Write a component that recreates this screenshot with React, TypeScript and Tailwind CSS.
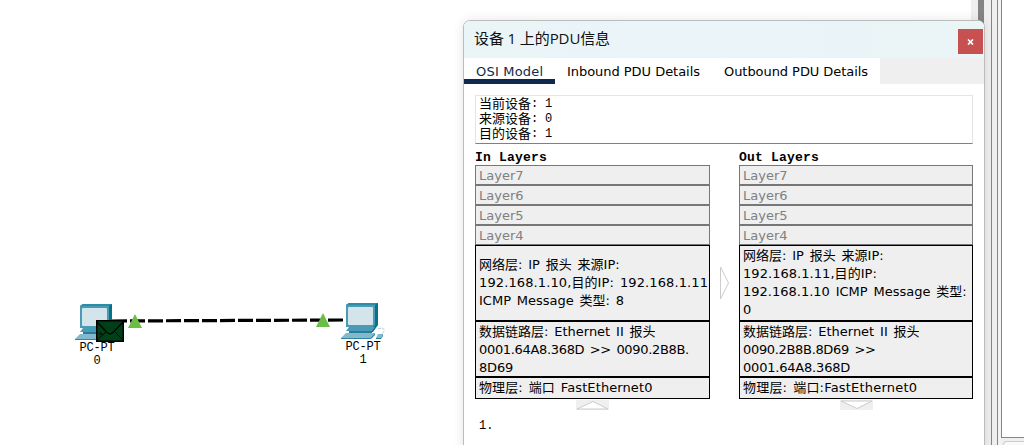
import type { ReactNode } from 'react';

const ui = "font-['DejaVu_Sans','Noto_Sans_CJK_SC',sans-serif]";
const mono = "font-['Liberation_Mono','Noto_Sans_CJK_SC',monospace]";

function Computer({ cable = false }: { cable?: boolean }) {
  return (
    <svg width="46" height="38" viewBox="0 0 46 38" className="block">
      <path d="M5 2 8 0H37V20L34 23Z" fill="#067389" />
      <path d="M5 2 8 0H37L34 2Z" fill="#2b8da6" />
      <rect x="5" y="2" width="29" height="22" fill="#4b9ab5" />
      <rect x="7" y="4" width="25" height="18" rx="1" fill="#d3e4ea" />
      <path d="M34 22 37 19V22L32 29H31V25Z" fill="#067389" />
      <path d="M8 24H34L31 28H5Z" fill="#4b9ab5" />
      <path d="M8 28H31V30H8Z" fill="#287e99" />
      <path d="M5 30H34L29 35H0Z" fill="#83b9cc" />
      <path d="M0 35H29L34 30V32L30 36H0Z" fill="#3284a0" />
      {cable && (
        <>
          <path d="M37 26C44 23 45 29 40 31" fill="none" stroke="#a9c9d6" strokeDasharray="3 1" />
          <path d="M37 31H42L40 35H35Z" fill="#83b9cc" />
          <path d="M35 35H40L42 31V33L40 36H35Z" fill="#287e99" />
        </>
      )}
    </svg>
  );
}

function Device({ name, cable }: { name: string; cable?: boolean }) {
  return (
    <div className="w-[46px]">
      <Computer cable={cable} />
      <div className={`${mono} flex flex-col items-center pr-[2px] text-[12px] leading-[13px] text-black`}>
        <span className="tracking-[-0.2px]">PC-PT</span>
        <span>{name}</span>
      </div>
    </div>
  );
}

function Topology() {
  return (
    <div className="relative h-full w-[463px] shrink-0">
      <svg className="absolute left-0 top-0" width="463" height="445">
        <path d="M112 321 345 320" stroke="#000" strokeWidth="3.2" strokeDasharray="15 3" />
        <path d="M135 314 142 328H128Z" fill="#6abd45" />
        <path d="M323 313 330 327H316Z" fill="#6abd45" />
      </svg>
      <div className="absolute left-[75px] top-[304px]">
        <Device name="0" />
      </div>
      <div className="absolute left-[341px] top-[303px]">
        <Device name="1" cable />
      </div>
      <svg className="absolute left-[96px] top-[320px]" width="28" height="22">
        <rect x=".75" y=".75" width="26.5" height="20.5" fill="#004019" stroke="#000" strokeWidth="1.5" />
        <path d="M1 2 11 12.5 14 14 17 12.5 27 2" fill="none" stroke="#000" strokeWidth="1.3" />
        <path d="M1 20 10 12M27 20 19 12M4 12 7 15M3 14H6" fill="none" stroke="#000" strokeWidth=".8" />
      </svg>
    </div>
  );
}

function Cell({ height, children }: { height: string; children: ReactNode }) {
  return (
    <div className={`${height} flex flex-col justify-center whitespace-nowrap border border-black bg-[#efefef] pl-[3px] text-[13px] leading-[18px] text-black [word-spacing:1.7px]`}>
      {children}
    </div>
  );
}

function Layers({ title, width, children }: { title: string; width: string; children: ReactNode }) {
  return (
    <section className={width}>
      <h2 className={`${mono} h-[16px] text-[13px] font-bold leading-[17px] tracking-[0.2px] text-black`}>{title}</h2>
      {['Layer7', 'Layer6', 'Layer5', 'Layer4'].map((layer) => (
        <div key={layer} className="h-[20px] border border-[#777] bg-[#efefef] pl-[3px] text-[13px] leading-[19px] text-[#808080]">
          {layer}
        </div>
      ))}
      {children}
    </section>
  );
}

function Dialog() {
  return (
    <div className={`${ui} absolute left-[463px] top-[20px] flex h-[435px] w-[522px] flex-col overflow-hidden rounded-t-[7px] border border-[#bcbcbc] bg-white shadow-[0_0_12px_rgba(0,0,0,0.10)]`}>
      <header className="flex h-[37px] shrink-0 items-start justify-between bg-linear-to-r from-[#eaf5f7] via-[#ebf4fa] to-[#eaf5f6] pl-[10px]">
        <h1 className="font-['Open_Sans','Noto_Sans_CJK_SC',sans-serif] text-[15px] leading-[35px] tracking-[-0.1px] text-[#111]">设备 1 上的PDU信息</h1>
        <button aria-label="Close" className="mr-px mt-[8px] flex h-[25px] w-[25px] items-center justify-center bg-[#c75050]">
          <svg width="7" height="6" viewBox="0 0 7 6">
            <path d="M1 .5 6 5.5M6 .5 1 5.5" stroke="#fff" strokeWidth="1.7" />
          </svg>
        </button>
      </header>
      <nav className="flex h-[26px] shrink-0 bg-[#efefef] text-[13px] leading-[27px] text-black">
        <span className="h-full w-[91px] whitespace-nowrap border-b-[5px] border-[#10284f] bg-white pl-[12px] tracking-[0.2px] text-[#10284f]">OSI Model</span>
        <span className="w-[157px] whitespace-nowrap bg-white pl-[12px] tracking-[-0.04px]">Inbound PDU Details</span>
        <span className="w-[168px] whitespace-nowrap bg-white pl-[12px] tracking-[-0.06px]">Outbound PDU Details</span>
      </nav>
      <main className="pl-[11px] pt-[11px]">
        <div className="h-[49px] w-[498px] border border-b-[#808080] border-l-[#e5e5e5] border-r-[#e5e5e5] border-t-[#e5e5e5] pl-[3px] text-[13px] leading-[15px] text-black">
          {[['当前设备', '1'], ['来源设备', '0'], ['目的设备', '1']].map(([label, value]) => (
            <div key={label} className="flex h-[15px]">
              <span className="w-[52px]">{label}</span>
              <span className={`${mono} w-[14px] pt-px text-[12px]`}>:</span>
              <span className={`${mono} pt-px text-[12px]`}>{value}</span>
            </div>
          ))}
        </div>
        <div className="mt-[5px] flex">
          <Layers title="In Layers" width="w-[235px]">
            <Cell height="h-[76px]">
              <span>网络层: IP 报头 来源IP:</span>
              <span className="tracking-[0.11px]">192.168.1.10,目的IP: 192.168.1.11</span>
              <span>ICMP Message 类型: 8</span>
            </Cell>
            <Cell height="h-[56px] pt-[2px]">
              <span>数据链路层: Ethernet II 报头</span>
              <span className="tracking-[-0.33px]">0001.64A8.368D &gt;&gt; 0090.2B8B.</span>
              <span className="tracking-[-0.2px]">8D69</span>
            </Cell>
            <Cell height="h-[22px]">
              <span className="tracking-[0.1px]">物理层: 端口 FastEthernet0</span>
            </Cell>
            <svg className="ml-[101px] mt-px block" width="33" height="10">
              <path d="M0 0H33V10H0Z" fill="#efefef" />
              <path d="M1 9 17 1.5 32 9Z" fill="#fff" stroke="#ccc" />
            </svg>
          </Layers>
          <div className="flex w-[29px] justify-center pt-[117px]">
            <svg width="9" height="34" className="mr-[1px]">
              <path d="M.5 1V33L8.5 17Z" fill="#fff" stroke="#ccc" />
            </svg>
          </div>
          <Layers title="Out Layers" width="w-[234px]">
            <Cell height="h-[76px]">
              <span>网络层: IP 报头 来源IP:</span>
              <span className="tracking-[0.05px]">192.168.1.11,目的IP:</span>
              <span>192.168.1.10 ICMP Message 类型:</span>
              <span>0</span>
            </Cell>
            <Cell height="h-[56px] pt-[2px]">
              <span>数据链路层: Ethernet II 报头</span>
              <span className="tracking-[-0.33px]">0090.2B8B.8D69 &gt;&gt;</span>
              <span className="tracking-[-0.2px]">0001.64A8.368D</span>
            </Cell>
            <Cell height="h-[22px]">
              <span className="tracking-[0.2px]">物理层: 端口:FastEthernet0</span>
            </Cell>
            <svg className="ml-[101px] mt-px block" width="33" height="10">
              <path d="M0 0H33V10H0Z" fill="#efefef" />
              <path d="M1 1 17 8.5 32 1Z" fill="#fff" stroke="#ccc" />
            </svg>
          </Layers>
        </div>
        <p className={`${mono} mt-[9px] pl-[4px] text-[12px] leading-[15px] text-black`}>1.</p>
      </main>
    </div>
  );
}

export default function App() {
  return (
    <div className="relative flex h-[445px] w-[1024px] overflow-hidden bg-white">
      <Topology />
      <div className="h-full w-[508px]" />
      <div className="h-full w-[7px] bg-[#efefef]" />
      <div className="h-full w-[6px] bg-[#848484]" />
      <div className="h-full w-[7px] bg-[#efefef]" />
      <div className="h-full w-[7px] border-x border-[#848490] bg-[#efefef]" />
      <div className="h-full w-[3px] bg-[#f3f3f3]" />
      <div className="flex h-full w-[23px] flex-col bg-[#efefef]">
        <div className="h-[438px] shrink-0 border-b border-l border-[#848490] bg-white" />
        <div className="ml-[2px] mt-[3px] h-[10px] shrink-0 rounded-tl-[4px] border-l border-t border-[#ccc] bg-[#fafafa]" />
      </div>
      <Dialog />
    </div>
  );
}
